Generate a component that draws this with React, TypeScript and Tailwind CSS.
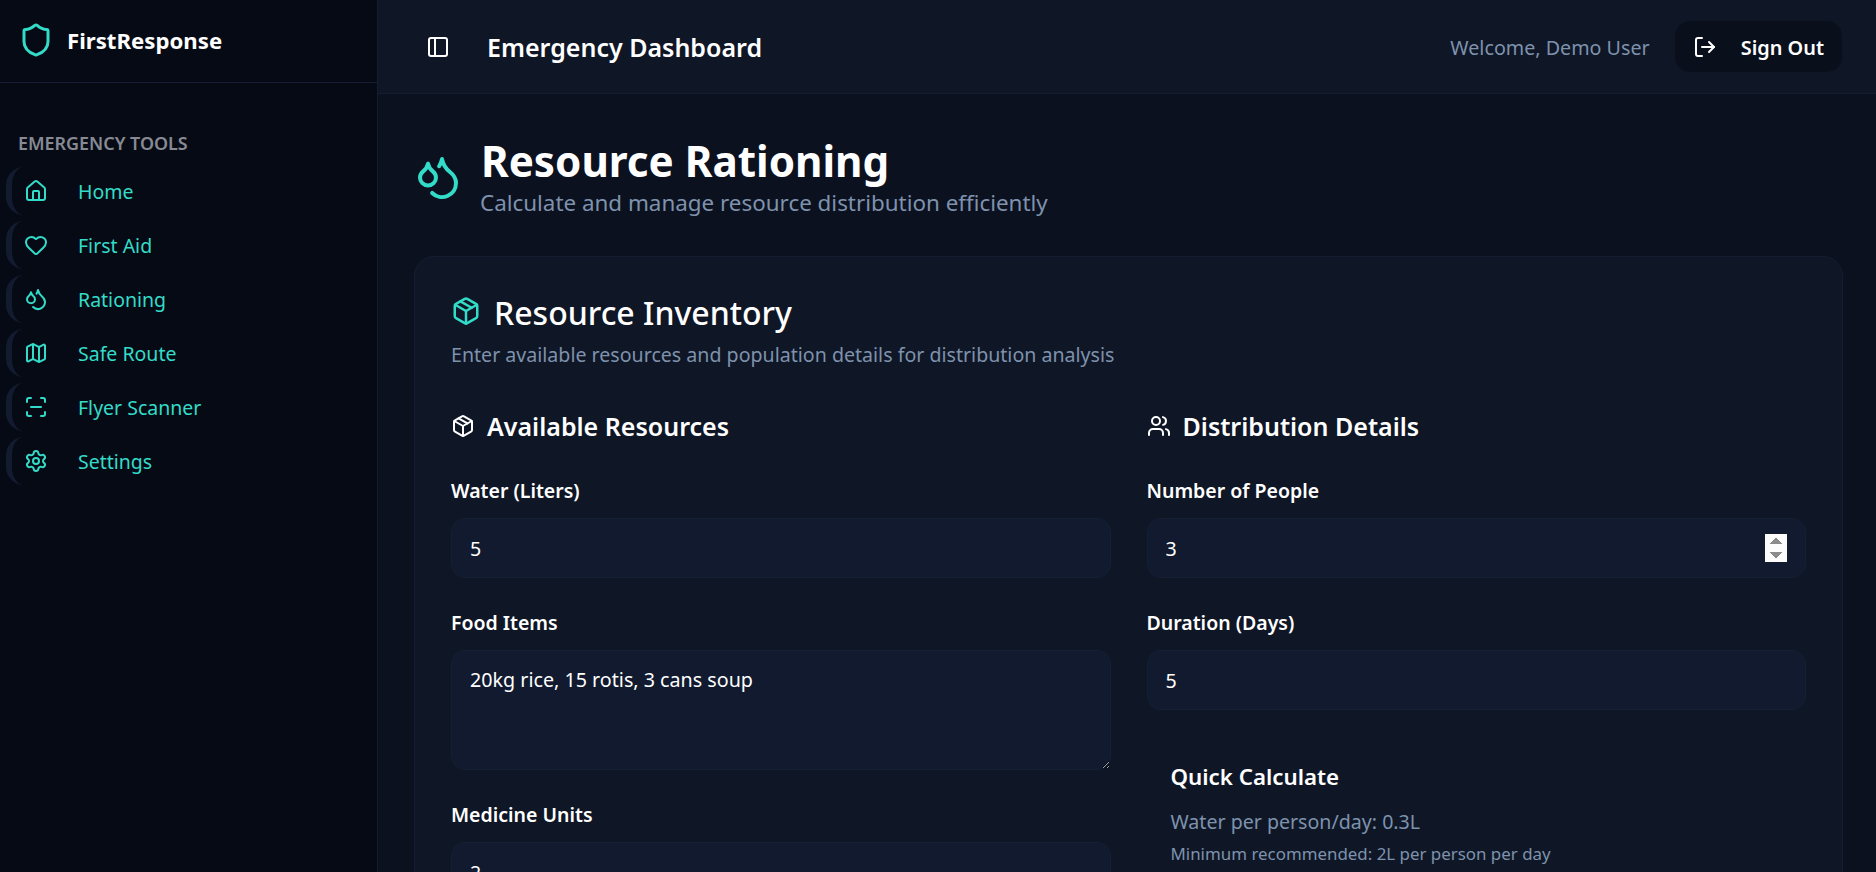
import { Shield, House, Heart, Droplets, Map, ScanLine, Settings, PanelLeft, LogOut, Package, Users } from "lucide-react";

const nav = [
  { label: "Home", Icon: House },
  { label: "First Aid", Icon: Heart },
  { label: "Rationing", Icon: Droplets },
  { label: "Safe Route", Icon: Map },
  { label: "Flyer Scanner", Icon: ScanLine },
  { label: "Settings", Icon: Settings },
];

const inputClass =
  "block w-full h-[60px] rounded-[14px] border border-[#152036] bg-[#111a2e] px-[18px] text-[19.6px] text-white outline-none";

function Field({ label, children, className = "" }: { label: string; children: React.ReactNode; className?: string }) {
  return (
    <div className={className}>
      <label className="block h-[26px] text-[19.5px] leading-[26px] font-semibold text-white">{label}</label>
      <div className="mt-[14px]">{children}</div>
    </div>
  );
}

export default function App() {
  return (
    <div className="flex h-[872px] w-[1876px] overflow-hidden bg-[#0b111f] font-['Noto_Sans','Open_Sans',sans-serif] text-white">
      <aside className="w-[378px] shrink-0 border-r border-[#141d31] bg-[#060a15]">
        <div className="flex h-[83px] items-center gap-[13px] border-b border-[#141d31] pb-[2px] pl-[18px]">
          <Shield className="h-[36px] w-[36px] text-[#33dcc8]" strokeWidth={2} />
          <span className="pt-[2px] text-[22.2px] font-bold">FirstResponse</span>
        </div>
        <div className="pt-[48px]">
          <div className="pl-[18px] text-[17.9px] leading-[24px] font-semibold text-[#878a93]">EMERGENCY TOOLS</div>
          <nav className="mt-[12px] flex flex-col gap-[6px] pl-[6px]">
            {nav.map(({ label, Icon }) => (
              <div key={label} className="flex h-[48px] items-center rounded-l-[18px] border-l-[6px] border-[#121b30] pl-[12px] text-[#33dcc8]">
                <Icon className="h-[24px] w-[24px]" strokeWidth={2} />
                <span className="ml-[30px] pt-[2px] text-[19.5px]">{label}</span>
              </div>
            ))}
          </nav>
        </div>
      </aside>
      <main className="flex min-w-0 flex-1 flex-col">
        <header className="flex h-[94px] shrink-0 items-center border-b border-[#141d31] bg-[#0f1626] pr-[33px] pl-[48px]">
          <PanelLeft className="h-[24px] w-[24px] text-white" strokeWidth={2} />
          <h1 className="ml-[37px] pt-[2px] text-[25px] font-semibold">Emergency Dashboard</h1>
          <div className="ml-auto pt-[2px] text-[19.7px] text-[#7e92ad]">Welcome, Demo User</div>
          <button className="ml-[24px] flex h-[53px] items-center rounded-[16px] border border-[#0f1626] bg-[#0a0f1c] pr-[18px] pl-[18px] text-[19.9px] font-semibold">
            <LogOut className="h-[24px] w-[24px]" strokeWidth={2} />
            <span className="ml-[24px] pt-[2px]">Sign Out</span>
          </button>
        </header>
        <div className="flex-1 overflow-hidden pt-[41px] pr-[33px] pl-[36px]">
          <div className="flex items-center">
            <Droplets className="h-[48px] w-[48px] text-[#33dcc8]" strokeWidth={2} />
            <div className="ml-[19px]">
              <h2 className="text-[42.2px] leading-[52px] font-bold">Resource Rationing</h2>
              <p className="-ml-[1px] text-[22.4px] leading-[32px] text-[#7e92ad]">Calculate and manage resource distribution efficiently</p>
            </div>
          </div>
          <section className="mt-[37px] rounded-t-[20px] border border-[#141e33] bg-[#0f1625] px-[36px] pt-[32px] pb-[36px]">
            <div className="flex items-center">
              <Package className="mb-[4px] h-[30px] w-[30px] text-[#33dcc8]" strokeWidth={2} />
              <h3 className="ml-[13px] text-[32px] leading-[48px] font-medium">Resource Inventory</h3>
            </div>
            <p className="mt-[4px] text-[19.6px] leading-[28px] text-[#7e92ad]">Enter available resources and population details for distribution analysis</p>
            <div className="mt-[41px] grid grid-cols-2 gap-x-[36px]">
              <div>
                <div className="flex h-[36px] items-center">
                  <Package className="mb-[4px] h-[24px] w-[24px] text-white" strokeWidth={2} />
                  <h4 className="ml-[12px] pb-[2px] text-[25px] font-semibold">Available Resources</h4>
                </div>
                <Field label="Water (Liters)" className="mt-[32px]">
                  <input className={inputClass} defaultValue="5" />
                </Field>
                <Field label="Food Items" className="mt-[32px]">
                  <textarea className="block h-[120px] w-full rounded-[14px] border border-[#152036] bg-[#111a2e] px-[18px] py-[14px] text-[19.7px] text-white outline-none" defaultValue="20kg rice, 15 rotis, 3 cans soup" />
                </Field>
                <Field label="Medicine Units" className="mt-[32px]">
                  <input className={inputClass} defaultValue="2" />
                </Field>
              </div>
              <div>
                <div className="flex h-[36px] items-center">
                  <Users className="mb-[5px] h-[24px] w-[24px] text-white" strokeWidth={2} />
                  <h4 className="ml-[12px] pb-[2px] text-[25px] font-semibold">Distribution Details</h4>
                </div>
                <Field label="Number of People" className="mt-[32px]">
                  <input type="number" className={inputClass + " [&::-webkit-inner-spin-button]:h-[18.67px] [&::-webkit-inner-spin-button]:opacity-100 [&::-webkit-inner-spin-button]:[zoom:1.5]"} defaultValue="3" />
                </Field>
                <Field label="Duration (Days)" className="mt-[32px]">
                  <input className={inputClass} defaultValue="5" />
                </Field>
                <div className="mt-[23px] rounded-[14px] border border-[#101827] bg-[#0f1727] pt-[28px] pr-[24px] pb-[24px] pl-[23px]">
                  <h5 className="text-[22.3px] leading-[30px] font-semibold">Quick Calculate</h5>
                  <p className="mt-[16px] text-[19.6px] leading-[28px] text-[#7e92ad]">Water per person/day: 0.3L</p>
                  <p className="mt-[6px] text-[16.9px] leading-[24px] text-[#7e92ad]">Minimum recommended: 2L per person per day</p>
                </div>
              </div>
            </div>
          </section>
        </div>
      </main>
    </div>
  );
}
